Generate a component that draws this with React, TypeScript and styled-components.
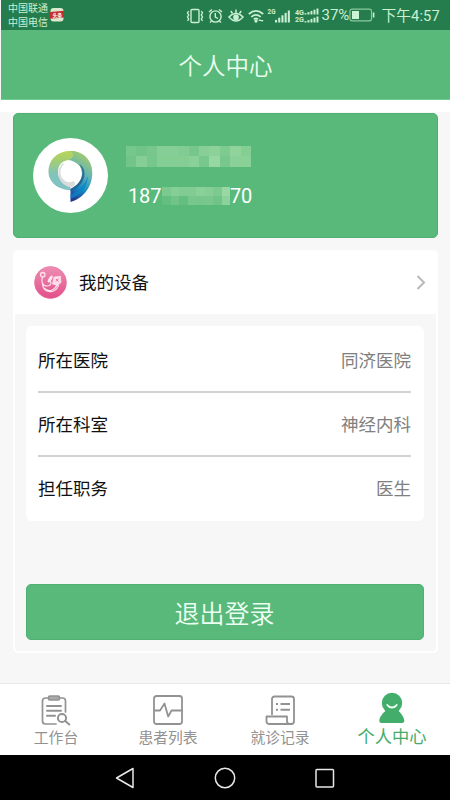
import React from 'react';
import styled, { createGlobalStyle } from 'styled-components';

const GREEN = '#58b97a';
const CJK = '"Noto Sans CJK SC", sans-serif';

const GlobalStyle = createGlobalStyle`
  * { box-sizing: border-box; }
  body { margin: 0; background: #fff; font-family: ${CJK}; }
  svg { display: block; flex: none; overflow: visible; }
`;

const Screen = styled.div`
  width: 450px;
  height: 800px;
  display: flex;
  flex-direction: column;
  overflow: hidden;
  background: #f7f7f7;
`;

const StatusBar = styled.header`
  height: 30px;
  margin-left: 1px;
  padding-left: 7px;
  display: flex;
  align-items: center;
  background: #257c4c;
  color: #c9f0d4;
`;

const Carriers = styled.div`
  width: 42px;
  font-size: 10px;
  line-height: 14px;
  white-space: nowrap;
`;

const StatusIcons = styled.div`
  display: flex;
  align-items: center;
  gap: 4.3px;
  margin-left: 122px;
  padding-top: 1px;
`;

const Percent = styled.span`
  width: 28px;
  margin-left: 2px;
  font: 15px/30px Roboto, sans-serif;
`;

const Clock = styled.span`
  margin-left: 6px;
  padding-top: 2px;
  font: 14.7px/28px Roboto, ${CJK};
  white-space: nowrap;
  letter-spacing: 0.1px;
`;

const TitleBar = styled.div`
  height: 70px;
  margin-left: 1px;
  display: flex;
  align-items: center;
  justify-content: center;
  background: ${GREEN};
  border-bottom: 1px solid #71cd91;
  color: #ecfff2;
  font-size: 23.5px;
  font-weight: 350;
  line-height: 34px;
`;

const Content = styled.main`
  height: 584px;
  padding: 1px 12px 0 13px;
  border-top: 12px solid #fff;
  border-bottom: 1px solid #e9e9e9;
`;

const Profile = styled.section`
  height: 125px;
  display: flex;
  align-items: center;
  padding-left: 20px;
  margin-bottom: 12px;
  background: ${GREEN};
  border: 1px solid #4eb071;
  border-radius: 5px;
`;

const Avatar = styled.div`
  width: 75px;
  height: 75px;
  margin-left: -1px;
  border-radius: 50%;
  background: #fff;
`;

const Identity = styled.div`
  height: 66px;
  margin-left: 18px;
  display: flex;
  flex-direction: column;
  justify-content: space-between;
  padding-top: 3px;
`;

const Mosaic = styled.div<{ $cols: number; $w: number; $h: number }>`
  display: grid;
  width: ${p => p.$w}px;
  height: ${p => p.$h}px;
  grid-template-columns: repeat(${p => p.$cols}, 1fr);
  grid-template-rows: 1fr 1fr;
`;

const Tile = styled.i<{ $a: number }>`
  background: rgba(235, 255, 210, ${p => p.$a / 100});
`;

const Phone = styled.div`
  display: flex;
  align-items: center;
  padding-left: 2px;
  color: #fff;
  font: 20px/26px Roboto, sans-serif;
`;

const PhonePart = styled.span<{ $w: number }>`
  width: ${p => p.$w}px;
  letter-spacing: -0.15px;
`;

const Panel = styled.section`
  height: 403px;
  border: 2px solid #fff;
  border-top: 0;
  border-radius: 5px;
`;

const DeviceRow = styled.div`
  height: 64px;
  padding: 0 10px 0 19px;
  display: flex;
  align-items: center;
  background: #fff;
  border-radius: 4px 4px 0 0;
`;

const DeviceLabel = styled.span`
  flex: 1;
  margin-left: 12px;
  color: #111;
  font-size: 17.5px;
  line-height: 26px;
`;

const InfoCard = styled.div`
  height: 195px;
  margin: 12px 12px 63px 11px;
  padding: 3px 13px 0 12px;
  border-radius: 6px;
  background: #fff;
`;

const InfoRow = styled.div`
  height: 64px;
  display: flex;
  align-items: center;
  justify-content: space-between;
  line-height: 26px;
  border-bottom: 2px solid #d2d2d2;
  &:last-child { border-bottom-color: transparent; }
`;

const Field = styled.span`
  color: #111;
  font-size: 17.5px;
`;

const Value = styled.span`
  color: #808080;
  font-size: 17.5px;
`;

const Logout = styled.button`
  display: block;
  width: 398px;
  height: 56px;
  margin: 0 0 0 11px;
  padding: 0 1px 1px 0;
  border: 1px solid #4eb071;
  border-radius: 5px;
  background: ${GREEN};
  color: #ecfff2;
  font: 350 25px/36px ${CJK};
`;

const TabBar = styled.nav`
  height: 71px;
  padding-right: 2px;
  display: grid;
  grid-template-columns: repeat(4, 1fr);
  background: #fff;
`;

const Tab = styled.div<{ $active?: boolean }>`
  display: flex;
  flex-direction: column;
  align-items: center;
  padding-top: ${p => (p.$active ? 8 : 11)}px;
  color: ${p => (p.$active ? '#43ad6b' : '#929292')};
  font-size: ${p => (p.$active ? 17.3 : 14.8)}px;
  line-height: 24px;
  white-space: nowrap;
  & > span { margin-top: ${p => (p.$active ? 0 : -1)}px; }
`;

const SystemNav = styled.footer`
  height: 45px;
  padding-right: 1px;
  display: flex;
  align-items: center;
  justify-content: center;
  gap: 80px;
  background: #000;
`;

const nameTiles = [
  20, 17, 21, 31, 31, 27, 21, 32, 35, 26, 39, 30,
  18, 31, 20, 30, 30, 30, 34, 22, 43, 22, 34, 34,
];
const phoneTiles = [
  24, 31, 27, 27, 34, 31, 25, 45,
  8, 17, 8, 22, 21, 22, 17, 36,
];

function NewsBadge() {
  return (
    <svg width="14" height="14" viewBox="0 0 14 14">
      <rect x=".5" y="0" width="13" height="13.5" rx="3" fill="#dfe8cf" />
      <path d="M0 4L14 2.7V9.5L0 10.8Z" fill="#c42f2c" />
      <text x="2.5" y="8.8" fontSize="4.8" fontWeight="700" fill="#fff" fontFamily="Noto Sans CJK SC">头条</text>
    </svg>
  );
}

function Bars({ x, y, h, step }: { x: number; y: number; h: number; step: number }) {
  return (
    <>
      {[0.22, 0.4, 0.6, 0.8, 1].map((k, i) => (
        <rect key={k} x={x + i * step} y={y - h * k} width={step * 0.65} height={h * k} fill="currentColor" />
      ))}
    </>
  );
}

function StatusGlyphs() {
  return (
    <StatusIcons>
      <svg width="18" height="16" viewBox="0 0 18 16" fill="none" stroke="currentColor" strokeWidth="1.4">
        <rect x="5" y="1.5" width="8" height="13" rx="1" />
        <path d="M2.7 3L1.5 5L2.7 7L1.5 9L2.7 11L1.5 13M15.3 3L16.5 5L15.3 7L16.5 9L15.3 11L16.5 13" />
      </svg>
      <svg width="15" height="16" viewBox="0 0 15 16" fill="none" stroke="currentColor" strokeWidth="1.4">
        <circle cx="7.5" cy="8.5" r="5.6" />
        <path d="M7.3 5V9L10 10.5M1 4L4 1.5M14 4L11 1.5M3.5 13L2 14.5M11.5 13L13 14.5" />
      </svg>
      <svg width="16" height="16" viewBox="0 0 16 16" fill="none" stroke="currentColor" strokeWidth="1.5">
        <path d="M1 9Q8 2 15 9Q8 17 1 9Z" />
        <circle cx="8" cy="9.3" r="2.1" fill="currentColor" />
        <path d="M8 5V1.5M4.5 5.5L2.8 3M11.5 5.5L13.2 3" />
      </svg>
      <svg width="16" height="16" viewBox="0 0 16 16" fill="none" stroke="currentColor" strokeWidth="1.7">
        <path d="M.8 6Q8-.3 15.2 6M3.3 8.8Q8 4.8 12.7 8.8M5.8 11.3Q8 9.4 10 11.3" />
        <circle cx="8" cy="13" r=".8" fill="currentColor" />
        <path d="M11 12.5H15M11 12.5L12.2 11.2M15 12.5L13.8 13.8" strokeWidth="1" />
      </svg>
      <svg width="23" height="16" viewBox="0 0 23 16">
        <text x="-.5" y="6" fontSize="7" fontWeight="700" fill="currentColor" fontFamily="Roboto" textLength="8" lengthAdjust="spacingAndGlyphs">2G</text>
        <Bars x={7} y={14.5} h={12} step={3.2} />
      </svg>
      <svg width="24" height="16" viewBox="0 0 24 16">
        <text x="0" y="6.5" fontSize="7" fontWeight="700" fill="currentColor" fontFamily="Roboto" textLength="9" lengthAdjust="spacingAndGlyphs">4G</text>
        <text x="0" y="14" fontSize="7" fontWeight="700" fill="currentColor" fontFamily="Roboto" textLength="9" lengthAdjust="spacingAndGlyphs">2G</text>
        <Bars x={9.5} y={6.5} h={6} step={3} />
        <Bars x={9.5} y={14.5} h={6} step={3} />
      </svg>
    </StatusIcons>
  );
}

function BatteryIcon() {
  return (
    <svg width="26" height="14" viewBox="0 0 26 14">
      <rect x="1" y="1.2" width="21.5" height="11.6" rx="2" fill="none" stroke="#8bcaa0" strokeWidth="1.2" />
      <rect x="3" y="3" width="7" height="8" fill="#cdf3d7" />
      <path d="M24.6 4.5V9.5" stroke="#cdf3d7" strokeWidth="1.6" />
    </svg>
  );
}

function BrandMark() {
  return (
    <svg width="75" height="75" viewBox="0 0 75 75">
      <defs>
        <linearGradient id="ring" x1=".3" y1="0" x2=".3" y2="1">
          <stop offset="0" stopColor="#b9d65a" />
          <stop offset=".25" stopColor="#a3cd74" />
          <stop offset=".6" stopColor="#80c4ba" />
          <stop offset="1" stopColor="#82c2c6" />
        </linearGradient>
        <linearGradient id="tail" x1=".6" y1="0" x2=".3" y2="1">
          <stop offset="0" stopColor="#a9ce66" />
          <stop offset=".4" stopColor="#62b3b6" />
          <stop offset=".7" stopColor="#168bc5" />
          <stop offset="1" stopColor="#26358b" />
        </linearGradient>
      </defs>
      <path d="M37.5 52C25 52 15.5 44 15.5 34C15.5 21 25 13 37.5 13C49 13 58 21 59 33L49 36C49 28 43 22 37 22C29 22 25 27 25 34C25 42 31 47 37.5 49Z" fill="url(#ring)" />
      <path d="M37.5 13C51 13 59.3 23 59.3 35C59.3 50 49 61 37.5 64V51C44 48 49 43 49 35C49 28 44 24 36 22C41 20 42 15 37.5 13Z" fill="url(#tail)" />
      <path d="M30 25C26 29 24.5 34 26 39C28 45 32 48 37.5 49.5C42 48.5 43 45.5 41 43C38 44.5 34 45 31 42C26 38 26.5 30 31 26Z" fill="#dadbdd" />
      <path d="M46 26C53 34 49 45 37.5 51V53C48 49 53 41 51 32C50 29 48 27 46 26Z" fill="#20628f" opacity=".85" />
      <path d="M37.5 57C47 53 52 46 55 38C54 50 47 57 37.5 61Z" fill="#0785c8" opacity=".75" />
    </svg>
  );
}

function StethoscopeIcon() {
  return (
    <svg width="33" height="33" viewBox="0 0 33 33" fill="none" stroke="#ffe0eb">
      <defs>
        <linearGradient id="pink" x1="0" y1="0" x2="0" y2="1">
          <stop stopColor="#ed8eb4" />
          <stop offset="1" stopColor="#e34e89" />
        </linearGradient>
      </defs>
      <circle cx="16.5" cy="16.5" r="16" fill="url(#pink)" stroke="#e66b9a" strokeWidth=".6" />
      <circle cx="8.8" cy="8.7" r="2.2" strokeWidth="1.3" />
      <path d="M8.5 11C7 15 8 20 13 20C17 20 18 17 16 15M8.5 18C9 24 13 26.5 18 25.5C22 24.5 24 22 24.5 19M10 22C15 27 21 24 23 19" strokeWidth="1.2" />
      <ellipse cx="16.2" cy="13" rx="1.6" ry="4" transform="rotate(30 16.2 13)" fill="#ffe5ee" stroke="none" />
      <path d="M20 11L26.5 10.2L27 16.5L23.5 19.5L18.5 18Z" fill="#ffdce9" strokeWidth=".7" />
      <path d="M22 13L24.5 15.5M24.5 12.5L22 15.5" stroke="#e9719e" />
    </svg>
  );
}

function ClipboardIcon() {
  return (
    <svg width="30" height="31" viewBox="0 0 30 31" fill="none" stroke="currentColor" strokeWidth="1.7" strokeLinecap="round">
      <path d="M7 3H4.5C2.5 3 1.5 4 1.5 6V26C1.5 28 2.5 29 4.5 29H15M19 3H21.5C23.5 3 24.5 4 24.5 6V17" />
      <rect x="7.5" y="1" width="11" height="4" rx="1.5" fill="#aaa" />
      <path d="M6 11H20M6 15.7H20M6 20.7H14" strokeWidth="2" />
      <circle cx="21" cy="23" r="4.1" strokeWidth="2" />
      <path d="M24.3 26L28.3 29.5" strokeWidth="2" />
    </svg>
  );
}

function PulseIcon() {
  return (
    <svg width="30" height="31" viewBox="0 0 30 31" fill="none" stroke="currentColor" strokeWidth="1.8" strokeLinejoin="round">
      <rect x="1" y="1" width="28" height="28" rx="2.5" />
      <path d="M1 15.5H7L11.5 8.5L15.2 21.5L18.5 15.5H29" />
    </svg>
  );
}

function RecordIcon() {
  return (
    <svg width="30" height="31" viewBox="0 0 30 31" fill="none" stroke="currentColor" strokeWidth="1.8" strokeLinejoin="round">
      <path d="M7 20V4C7 2.5 8 1.5 9.5 1.5H26.5C28 1.5 29 2.5 29 4V26C29 28 28 29 26.5 29H4.5C2.5 29 1.5 28 1.5 26.5V21.5H22V26.5C22 28 23.5 29 25.5 29" />
      <path d="M11 9H13M15.5 9H25M11 14.7H13M15.5 14.7H25" strokeWidth="2" />
    </svg>
  );
}

function PersonIcon() {
  return (
    <svg width="28" height="32" viewBox="0 0 28 32">
      <path d="M8.5 18C5 21 1.7 24.5 1.3 28.5C1.2 30 2 31 3.5 31H24C25.5 31 26.5 30 26.3 28.5C25.8 24.5 23 21 19.5 18Z" fill="currentColor" />
      <circle cx="14" cy="11" r="10.2" fill="currentColor" />
      <path d="M9.3 13C11.5 16.2 16.5 16.2 18.7 13" fill="none" stroke="#effff3" strokeWidth="2" strokeLinecap="round" />
    </svg>
  );
}

const fields = [
  { name: '所在医院', value: '同济医院' },
  { name: '所在科室', value: '神经内科' },
  { name: '担任职务', value: '医生' },
];

const tabs = [
  { label: '工作台', Icon: ClipboardIcon },
  { label: '患者列表', Icon: PulseIcon },
  { label: '就诊记录', Icon: RecordIcon },
  { label: '个人中心', Icon: PersonIcon, active: true },
];

export default function App() {
  return (
    <Screen>
      <GlobalStyle />
      <StatusBar>
        <Carriers>中国联通<br />中国电信</Carriers>
        <NewsBadge />
        <StatusGlyphs />
        <Percent>37%</Percent>
        <BatteryIcon />
        <Clock>下午4:57</Clock>
      </StatusBar>
      <TitleBar>个人中心</TitleBar>
      <Content>
        <Profile>
          <Avatar><BrandMark /></Avatar>
          <Identity>
            <Mosaic $cols={12} $w={125} $h={21}>
              {nameTiles.map((a, i) => <Tile key={i} $a={a} />)}
            </Mosaic>
            <Phone>
              <PhonePart $w={34}>187</PhonePart>
              <Mosaic $cols={8} $w={68} $h={18}>
                {phoneTiles.map((a, i) => <Tile key={i} $a={a} />)}
              </Mosaic>
              <PhonePart $w={23}>70</PhonePart>
            </Phone>
          </Identity>
        </Profile>
        <Panel>
          <DeviceRow>
            <StethoscopeIcon />
            <DeviceLabel>我的设备</DeviceLabel>
            <svg width="10" height="16" viewBox="0 0 10 16" fill="none" stroke="#b9b9b9" strokeWidth="2">
              <path d="M1.5 2L8 8.5L1.5 15" />
            </svg>
          </DeviceRow>
          <InfoCard>
            {fields.map(f => (
              <InfoRow key={f.name}>
                <Field>{f.name}</Field>
                <Value>{f.value}</Value>
              </InfoRow>
            ))}
          </InfoCard>
          <Logout>退出登录</Logout>
        </Panel>
      </Content>
      <TabBar>
        {tabs.map(({ label, Icon, active }) => (
          <Tab key={label} $active={active}>
            <Icon />
            <span>{label}</span>
          </Tab>
        ))}
      </TabBar>
      <SystemNav>
        <svg width="20" height="22" viewBox="0 0 20 22" fill="none" stroke="#e8e8e8" strokeWidth="1.5" strokeLinejoin="round">
          <path d="M18 1.5V20.5L1.5 11Z" />
        </svg>
        <svg width="20" height="22" viewBox="0 0 20 22" fill="none" stroke="#e8e8e8" strokeWidth="1.5">
          <circle cx="10" cy="11" r="9.7" />
        </svg>
        <svg width="20" height="22" viewBox="0 0 20 22" fill="none" stroke="#e8e8e8" strokeWidth="1.5">
          <rect x="1" y="2.5" width="17.5" height="17.5" rx="1" />
        </svg>
      </SystemNav>
    </Screen>
  );
}
